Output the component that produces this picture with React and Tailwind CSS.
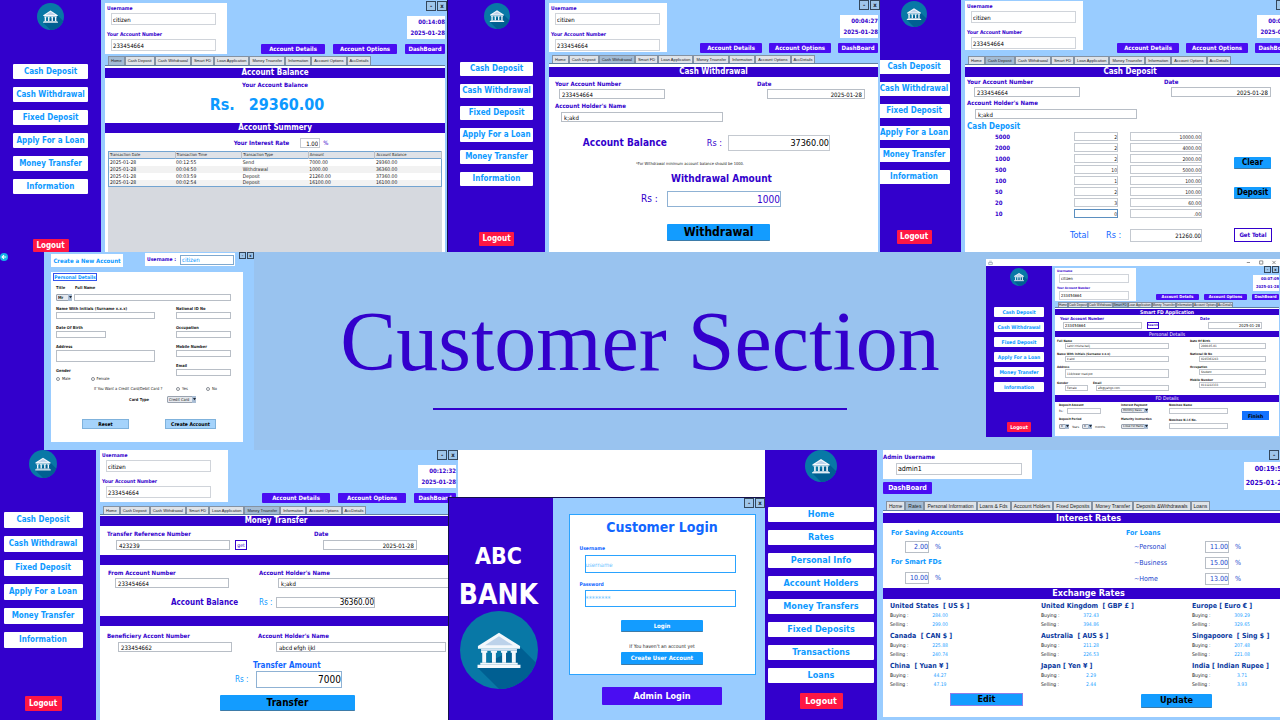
import { useId } from "react";
import clsx from "clsx";

const CUSTOMER_NAV = [
  "Cash Deposit",
  "Cash Withdrawal",
  "Fixed Deposit",
  "Apply For a Loan",
  "Money Transfer",
  "Information",
];
const ADMIN_NAV = [
  "Home",
  "Rates",
  "Personal Info",
  "Account Holders",
  "Money Transfers",
  "Fixed Deposits",
  "Transactions",
  "Loans",
];
const CUSTOMER_TABS = [
  "Home",
  "Cash Deposit",
  "Cash Withdrawal",
  "Smart FD",
  "Loan Application",
  "Money Trsansfer",
  "Information",
  "Account Options",
  "AccDetails",
];
const ADMIN_TABS = [
  "Home",
  "Rates",
  "Personal Information",
  "Loans & Fds",
  "Account Holders",
  "Fixed Deposits",
  "Money Transfer",
  "Deposits &Withdrawals",
  "Loans",
];

function BankLogo({ className }) {
  const clip = useId();
  return (
    <svg viewBox="-100 -100 200 200" className={clsx("shrink-0", className)} role="img" aria-label="Bank">
      <clipPath id={clip}>
        <circle r="100" />
      </clipPath>
      <circle r="100" fill="#0878a6" />
      <path clipPath={`url(#${clip})`} d="M52 -10 L152 90 L50 150 L-54 46 Z" fill="#005f92" />
      <path d="M-54 -10 L0 -44 L54 -10 V-3 H-54 Z" fill="#f4f8fc" />
      <path d="M-36 -12 L0 -35 L36 -12 Z" fill="#bcd2ea" />
      <path d="M-46 -3 H46 V2 H-46 Z" fill="#d5e4f3" />
      <g fill="#f4f8fc">
        <path d="M-46 2 h16 v5 h-3 v26 h-10 v-26 h-3 Z" />
        <path d="M-21 2 h16 v5 h-3 v26 h-10 v-26 h-3 Z" />
        <path d="M5 2 h16 v5 h-3 v26 h-10 v-26 h-3 Z" />
        <path d="M30 2 h16 v5 h-3 v26 h-10 v-26 h-3 Z" />
        <path d="M-48 33 H48 V38 H-48 Z" />
        <path d="M-55 38 H55 V46 H-55 Z" />
      </g>
    </svg>
  );
}

function Field({ label, value, type = "text", className, labelClass, inputClass, multiline }) {
  const id = useId();
  const box = clsx(
    "block border bg-white leading-none outline-none",
    inputClass
  );
  return (
    <div className={clsx("flex flex-col", className)}>
      <label htmlFor={id} className={clsx("whitespace-nowrap font-bold", labelClass)}>
        {label}
      </label>
      {multiline ? (
        <textarea id={id} defaultValue={value} className={clsx(box, "resize-none")} />
      ) : (
        <input id={id} type={type} defaultValue={value} className={box} />
      )}
    </div>
  );
}

function Box({ label, value, className }) {
  return (
    <input
      aria-label={label}
      defaultValue={value}
      className={clsx("shrink-0 border bg-white leading-none outline-none", className)}
    />
  );
}

function Pick({ label, options, className }) {
  return (
    <span className={clsx("relative inline-flex shrink-0", className)}>
      <select
        aria-label={label}
        className="w-full appearance-none rounded-[1px] border border-[#9aa3b0] bg-[#e6e9ee] px-px leading-none outline-none"
      >
        {options.map((o) => (
          <option key={o}>{o}</option>
        ))}
      </select>
      <span className="pointer-events-none absolute inset-y-0 right-0 flex w-1 items-center justify-center bg-[#a9bdd4]">
        <svg viewBox="0 0 4 3" className="w-[3px]">
          <path d="M0 0 H4 L2 3 Z" fill="#1d2733" />
        </svg>
      </span>
    </span>
  );
}

function Sidebar({ items, className, logoClass, navClass, itemClass, logoutClass }) {
  return (
    <aside className={clsx("flex shrink-0 flex-col items-center bg-[#3300cc]", className)}>
      <BankLogo className={logoClass} />
      <nav className={clsx("flex flex-col", navClass)}>
        {items.map((item) => (
          <button
            key={item}
            type="button"
            className={clsx(
              "flex items-center justify-center whitespace-nowrap rounded-[1px] bg-white font-bold leading-none text-[#0d99ff]",
              itemClass
            )}
          >
            {item}
          </button>
        ))}
      </nav>
      <button
        type="button"
        className={clsx(
          "mt-auto flex items-center justify-center rounded-[1px] bg-[#ff1744] font-bold leading-none text-white",
          logoutClass
        )}
      >
        Logout
      </button>
    </aside>
  );
}

function WindowButtons({ className, small }) {
  const b = clsx(
    "flex items-center justify-center border border-[#33475c] bg-[#9fc6ea] font-bold leading-none text-[#14202c]",
    small ? "size-[7px] text-[4px]" : "size-[10px] text-[6px]"
  );
  return (
    <div className={clsx("flex justify-end gap-px", className)}>
      <button type="button" aria-label="Minimize" className={b}>
        -
      </button>
      <button type="button" aria-label="Close" className={b}>
        x
      </button>
    </div>
  );
}

const NAV_BUTTON =
  "flex items-center justify-center whitespace-nowrap rounded-[1px] bg-[#4a0df2] font-bold leading-none text-white";

function CustomerHeader({ time, className, boxClass, navGap = "gap-2", navButton = "w-16", homeButton = "w-10" }) {
  return (
    <header className={clsx("flex", className)}>
      <div className={clsx("shrink-0 bg-white px-[2px] pt-px text-[#3300cc]", boxClass)}>
        <Field
          label="Username"
          value="citizen"
          labelClass="text-[5px] leading-[8px]"
          inputClass="mt-px ml-1 h-3 w-[105px] border-[#d0d4da] px-px text-[6px] text-black"
        />
        <Field
          label="Your Account Number"
          value="233454664"
          className="mt-[5px]"
          labelClass="text-[5px] leading-[8px]"
          inputClass="mt-px ml-1 h-3 w-[105px] border-[#d0d4da] px-px text-[6px] text-black"
        />
      </div>
      <div className="flex flex-1 flex-col items-end justify-end">
        <WindowButtons className="-mr-[2px] mb-[5px]" />
        <div className="flex h-[23px] w-[38px] flex-col justify-around bg-white text-right text-[6px] leading-none font-bold whitespace-nowrap text-[#3300cc]">
          <span>{time}</span>
          <span>2025-01-28</span>
        </div>
        <div className={clsx("mt-[5px] flex text-[6px]", navGap)}>
          <button type="button" className={clsx(NAV_BUTTON, "h-[10px]", navButton)}>
            Account Details
          </button>
          <button type="button" className={clsx(NAV_BUTTON, "h-[10px]", navButton)}>
            Account Options
          </button>
          <button type="button" className={clsx(NAV_BUTTON, "h-[10px]", homeButton)}>
            DashBoard
          </button>
        </div>
      </div>
    </header>
  );
}

function Tabs({ items, active, className, tabClass = "px-[2px]" }) {
  return (
    <div
      role="tablist"
      className={clsx(
        "flex border-b border-[#5f7fa3] bg-[#99ccff] pl-[3px] font-['Liberation_Sans',Arial,sans-serif] text-[#222]",
        className
      )}
    >
      {items.map((t) => (
        <button
          key={t}
          type="button"
          role="tab"
          aria-selected={t === active}
          className={clsx(
            "border border-b-0 border-[#8492a3] leading-none whitespace-nowrap",
            tabClass,
            t === active ? "bg-[#a3bbd3]" : "bg-[#dfe3e8]"
          )}
        >
          {t}
        </button>
      ))}
    </div>
  );
}

function Bar({ children, className }) {
  return (
    <h2
      className={clsx(
        "flex shrink-0 items-center justify-center bg-[#3300cc] leading-none font-bold whitespace-nowrap text-white",
        className
      )}
    >
      {children}
    </h2>
  );
}

const BLUE_BUTTON =
  "flex items-center justify-center whitespace-nowrap rounded-[1px] border-b border-[#3d7ba8] bg-[#139cff] font-bold leading-none";
const LABEL = "text-[6px] leading-[8px] text-[#3300cc]";
const INPUT = "h-[10px] border-[#b8bec6] px-[2px] text-[6px] text-black";

const TRANSACTIONS = [
  ["2025-01-28", "00:12:55", "Send", "7000.00", "29360.00"],
  ["2025-01-28", "00:04:50", "Withdrawal", "1000.00", "36360.00"],
  ["2025-01-28", "00:03:59", "Deposit", "21260.00", "37360.00"],
  ["2025-01-28", "00:02:54", "Deposit", "16100.00", "16100.00"],
];

function HomeWindow() {
  return (
    <section className="flex min-w-0 overflow-hidden bg-[#99ccff]">
      <Sidebar
        items={CUSTOMER_NAV}
        className="w-[101px] pt-[3px]"
        logoClass="size-[27px]"
        navClass="mt-[34px] gap-2"
        itemClass="h-[15px] w-[75px] text-[8px]"
        logoutClass="h-[13px] w-9 text-[8px]"
      />
      <div className="flex min-w-0 flex-1 flex-col pr-[2px] pl-1">
        <CustomerHeader time="00:14:08" className="pb-[2px]" boxClass="mt-[3px] h-[51px] w-[122px]" />
        <Tabs items={CUSTOMER_TABS} active="Home" className="h-[10px] text-[4px]" />
        <div className="flex flex-1 flex-col bg-white pt-[2px]">
          <Bar className="h-[10px] text-[8px]">Account Balance</Bar>
          <p className="mt-[3px] text-center text-[6px] leading-[8px] font-bold text-[#3300cc]">Your Account Balance</p>
          <p className="mt-[7px] flex justify-center gap-[14px] pr-4 text-[16px] leading-[18px] font-bold text-[#0d99ff]">
            <span>Rs.</span>
            <span>29360.00</span>
          </p>
          <Bar className="mt-[9px] h-[10px] text-[8px]">Account Summery</Bar>
          <div className="mt-[5px] flex items-center justify-center gap-[3px] pl-3 text-[6px] leading-none text-[#3300cc]">
            <span className="mr-2 font-bold">Your Interest Rate</span>
            <Box label="Interest rate" value="1.00" className="h-[10px] w-5 border-[#c4c9d0] px-px text-right text-black" />
            <span>%</span>
          </div>
          <div className="mx-[3px] mt-[3px] flex-1 bg-[#d6d9df]">
            <table className="w-full table-fixed border border-[#73a4d1] text-left text-[5px] leading-none text-[#222]">
              <thead>
                <tr className="h-[7px] border-b border-[#73a4d1] bg-[#dfe2e7] text-[4px]">
                  {["Transaction Date", "Transaction Time", "Transaction Type", "Amount", "Account Balance"].map((h) => (
                    <th key={h} className="border-r border-[#b9bec7] p-0 pl-px font-normal">
                      {h}
                    </th>
                  ))}
                </tr>
              </thead>
              <tbody>
                {TRANSACTIONS.map((row) => (
                  <tr key={row[1]} className="h-[7px] bg-white even:bg-[#f2f2f2]">
                    {row.map((c, i) => (
                      <td key={i} className="p-0 pl-px">
                        {c}
                      </td>
                    ))}
                  </tr>
                ))}
              </tbody>
            </table>
          </div>
        </div>
      </div>
    </section>
  );
}

function WithdrawalWindow() {
  return (
    <section className="flex min-w-0 overflow-hidden border-l border-[#14104a] bg-[#99ccff]">
      <Sidebar
        items={CUSTOMER_NAV}
        className="w-[97px] pt-[3px] pb-[6px]"
        logoClass="size-[26px]"
        navClass="mt-[33px] gap-2"
        itemClass="h-[14px] w-[73px] text-[8px]"
        logoutClass="h-[14px] w-[35px] text-[8px]"
      />
      <div className="flex min-w-0 flex-1 flex-col pr-[2px] pl-1">
        <CustomerHeader
          time="00:04:27"
          className="pb-[2px]"
          boxClass="mt-[3px] h-[49px] w-[118px]"
          navGap="gap-[7px]"
          navButton="w-[62px]"
        />
        <Tabs items={CUSTOMER_TABS} active="Cash Withdrawal" className="h-[9px] text-[4px]" />
        <div className="flex flex-1 flex-col bg-white pt-[3px]">
          <Bar className="h-[10px] text-[8px]">Cash Withdrawal</Bar>
          <div className="mt-[3px] flex justify-between pr-[13px] pl-[6px]">
            <Field label="Your Account Number" value="233454664" labelClass={LABEL} inputClass={clsx(INPUT, "mt-px ml-1 w-[106px]")} />
            <Field label="Date" value="2025-01-28" labelClass={LABEL} inputClass={clsx(INPUT, "mt-px ml-[10px] w-[98px] text-right")} />
          </div>
          <Field
            label="Account Holder's Name"
            value="k;akd"
            className="mt-[3px] pl-[6px]"
            labelClass={LABEL}
            inputClass={clsx(INPUT, "mt-[2px] ml-[6px] w-[162px]")}
          />
          <div className="mt-[13px] flex items-center justify-end pr-12 leading-none text-[#3300cc]">
            <span className="mr-10 text-[10px] font-bold">Account Balance</span>
            <span className="mr-[6px] text-[9px]">Rs :</span>
            <Box label="Account balance" value="37360.00" className="h-4 w-[102px] border-[#c4c9d0] text-right text-[9px] text-black" />
          </div>
          <p className="mt-[10px] pl-[87px] text-[4px] leading-[6px] text-[#222]">
            *For Withdrawal minimum account balance should be 1000.
          </p>
          <h3 className="mt-[6px] pl-[122px] text-[10px] leading-3 font-bold text-[#3300cc]">Withdrawal Amount</h3>
          <div className="mt-[6px] flex items-center pl-[92px] leading-none text-[#3300cc]">
            <span className="w-[26px] text-[10px]">Rs :</span>
            <Box label="Withdrawal amount" value="1000" className="h-4 w-[114px] border-[#8fb2d4] text-right text-[10px]" />
          </div>
          <button type="button" className={clsx(BLUE_BUTTON, "mt-[17px] ml-[118px] h-[17px] w-[103px] text-[12px] text-black")}>
            Withdrawal
          </button>
        </div>
      </div>
    </section>
  );
}

const NOTES = [
  ["5000", "2", "10000.00"],
  ["2000", "2", "4000.00"],
  ["1000", "2", "2000.00"],
  ["500", "10", "5000.00"],
  ["100", "1", "100.00"],
  ["50", "2", "100.00"],
  ["20", "3", "60.00"],
  ["10", "0", ".00"],
];

function DepositWindow() {
  return (
    <section className="min-w-0 overflow-hidden bg-[#99ccff]">
      <div className="-mr-[17px] -ml-4 flex h-full">
        <Sidebar
          items={CUSTOMER_NAV}
          className="w-[97px] pt-px pb-2 pl-[3px]"
          logoClass="size-[26px]"
          navClass="mt-[33px] gap-2"
          itemClass="h-[14px] w-[72px] text-[8px]"
          logoutClass="h-[14px] w-[35px] text-[8px]"
        />
        <div className="flex min-w-0 flex-1 flex-col pr-[2px] pl-1">
          <CustomerHeader
            time="00:03:52"
            className="pb-[3px]"
            boxClass="mt-px h-[49px] w-[118px]"
            navGap="gap-[7px]"
            navButton="w-[62px]"
          />
          <Tabs items={CUSTOMER_TABS} active="Cash Deposit" className="h-[9px] text-[4px]" />
          <div className="flex flex-1 flex-col bg-white pt-[2px]">
            <Bar className="h-[10px] text-[8px]">Cash Deposit</Bar>
            <div className="mt-px flex justify-between pr-6 pl-[2px]">
              <Field label="Your Account Number" value="233454664" labelClass={LABEL} inputClass={clsx(INPUT, "mt-px ml-[7px] w-[106px]")} />
              <Field label="Date" value="2025-01-28" labelClass={LABEL} inputClass={clsx(INPUT, "mt-px ml-[7px] w-[100px] text-right")} />
            </div>
            <Field
              label="Account Holder's Name"
              value="k;akd"
              className="mt-[2px] pl-[2px]"
              labelClass={LABEL}
              inputClass={clsx(INPUT, "mt-[2px] ml-2 w-[162px]")}
            />
            <h3 className="mt-[3px] pl-[2px] text-[8px] leading-[9px] font-bold text-[#0d99ff]">Cash Deposit</h3>
            <div className="mt-px flex">
              <div className="flex flex-col gap-[2px] pl-[30px]">
                {NOTES.map(([note, count, amount]) => (
                  <div key={note} className="flex h-[9px] items-center text-[5px] leading-none">
                    <span className="w-[79px] text-[6px] font-bold text-[#3300cc]">{note}</span>
                    <Box
                      label={`Count of ${note}`}
                      value={count}
                      className={clsx("mr-3 h-[9px] w-11 text-right text-[#222]", note === "10" ? "border-[#5b8fc0]" : "border-[#c4c9d0]")}
                    />
                    <Box label={`Amount in ${note}`} value={amount} className="h-[9px] w-[72px] border-[#c4c9d0] text-right text-[#222]" />
                  </div>
                ))}
              </div>
              <div className="ml-8 flex flex-col gap-[18px] pt-[25px] text-[8px] text-black">
                <button type="button" className={clsx(BLUE_BUTTON, "h-3 w-[37px]")}>
                  Clear
                </button>
                <button type="button" className={clsx(BLUE_BUTTON, "h-3 w-[37px]")}>
                  Deposit
                </button>
              </div>
            </div>
            <div className="mt-[10px] flex items-center pl-[105px] text-[9px] leading-none text-[#1166ff]">
              <span className="w-9">Total</span>
              <span className="w-6">Rs :</span>
              <Box label="Total" value="21260.00" className="h-[13px] w-[72px] border-[#c4c9d0] text-right text-[6px] text-black" />
              <button
                type="button"
                className="ml-8 h-[14px] w-[38px] border border-[#3300cc] bg-white text-[6px] font-bold whitespace-nowrap text-[#3300cc]"
              >
                Get Total
              </button>
            </div>
          </div>
        </div>
      </div>
    </section>
  );
}

const FORM_LABEL = "text-[4px] leading-[5px] text-[#222]";
const FORM_INPUT = "h-[7px] border-[#b8bec6] text-[4px] text-black";

function Radio({ name, children }) {
  return (
    <label className="flex items-center gap-[2px]">
      <input type="radio" name={name} className="size-1 appearance-none rounded-full border border-[#8a8f97] bg-white" />
      {children}
    </label>
  );
}

function CreateAccountWindow() {
  return (
    <section className="flex w-[254px] shrink-0 overflow-hidden bg-[#99ccff]">
      <aside className="w-11 shrink-0 bg-[#3300cc] pt-px">
        <button type="button" aria-label="Back" className="flex size-[8px] items-center justify-center rounded-full bg-[#14b4e6]">
          <svg viewBox="0 0 8 8" className="size-[6px]" fill="none" stroke="#ffffff" strokeWidth="1.5">
            <path d="M7 4 H1.5 M4 1.5 L1.5 4 L4 6.5" />
          </svg>
        </button>
      </aside>
      <div className="flex flex-1 flex-col pb-2 pl-[7px]">
        <div className="flex h-5 items-start">
          <h2 className="mt-[2px] flex h-[13px] w-[72px] items-center justify-center bg-white text-[6px] font-bold whitespace-nowrap text-[#0d99ff]">
            Create a New Account
          </h2>
          <label className="mt-px ml-[22px] flex h-[13px] w-[90px] items-center justify-between bg-white pr-px pl-[2px] text-[5px] font-bold whitespace-nowrap text-[#3300cc]">
            Username :
            <input defaultValue="citizen" className="h-[10px] w-[54px] border border-[#7fa9d0] px-px text-[6px] font-normal text-[#0d99ff]" />
          </label>
          <WindowButtons small className="ml-auto" />
        </div>
        <form className="mr-[11px] flex flex-1 flex-col bg-white px-[5px] pt-px text-[4px] leading-[5px] text-[#222]">
          <h3 className="-ml-[3px] flex h-2 w-11 items-center justify-center border border-[#3355ee] text-[5px] font-bold whitespace-nowrap text-[#0d99ff]">
            Personal Details
          </h3>
          <div className="mt-[4px] flex gap-[10px] font-bold">
            <span>Title</span>
            <span>Full Name</span>
          </div>
          <div className="mt-1 flex gap-[2px]">
            <Pick label="Title" options={["Mr", "Mrs", "Miss"]} className="h-[7px] w-4 font-bold" />
            <Box label="Full name" value="" className="h-[7px] w-[157px] border-[#b8bec6]" />
          </div>
          <div className="mt-[5px] grid grid-cols-[120px_1fr]">
            <div className="flex flex-col">
              <Field label="Name With Initials (Surname x.x.x)" labelClass={FORM_LABEL} inputClass={clsx(FORM_INPUT, "mt-px w-[99px]")} />
              <Field className="mt-[6px]" label="Date Of Birth" labelClass={FORM_LABEL} inputClass={clsx(FORM_INPUT, "mt-px w-[50px]")} />
              <Field multiline className="mt-[6px]" label="Address" labelClass={FORM_LABEL} inputClass="mt-px h-3 w-[99px] border-[#b8bec6]" />
              <span className="mt-[6px] font-bold">Gender</span>
              <div className="mt-[3px] flex gap-5">
                <Radio name="gender">Male</Radio>
                <Radio name="gender">Female</Radio>
              </div>
            </div>
            <div className="flex flex-col">
              <Field label="National ID No" labelClass={FORM_LABEL} inputClass={clsx(FORM_INPUT, "mt-px w-[55px]")} />
              <Field className="mt-[6px]" label="Occupation" labelClass={FORM_LABEL} inputClass={clsx(FORM_INPUT, "mt-px w-[55px]")} />
              <Field className="mt-[6px]" label="Mobile Number" labelClass={FORM_LABEL} inputClass={clsx(FORM_INPUT, "mt-px w-[55px]")} />
              <Field className="mt-[6px]" label="Email" labelClass={FORM_LABEL} inputClass={clsx(FORM_INPUT, "mt-px w-[55px]")} />
            </div>
          </div>
          <div className="mt-[5px] grid grid-cols-[120px_30px_1fr]">
            <span className="pl-[38px]">If You Want a Credit Card/Debit Card ?</span>
            <Radio name="card">Yes</Radio>
            <Radio name="card">No</Radio>
          </div>
          <div className="mt-[5px] flex items-center pl-[73px]">
            <span className="w-[38px] font-bold">Card Type</span>
            <Pick label="Card type" options={["Credit Card", "Debit Card"]} className="h-[7px] w-[29px]" />
          </div>
          <div className="mt-4 flex gap-9 pl-[26px] text-[5px] font-bold text-black">
            <button type="reset" className="h-[10px] w-[47px] border border-[#7fb2dc] bg-[#a5d3fb]">
              Reset
            </button>
            <button type="button" className="h-[10px] w-[51px] border border-[#7fb2dc] bg-[#a5d3fb] whitespace-nowrap">
              Create Account
            </button>
          </div>
        </form>
      </div>
    </section>
  );
}

const TINY_LABEL = "text-[3px] leading-[4px] text-[#222]";
const TINY_INPUT = "h-[6px] border-[#c0c5cc] px-px text-[3px] text-[#222]";

function SmartFdWindow() {
  return (
    <section className="flex w-[294px] shrink-0 flex-col self-start overflow-hidden bg-[#99ccff]">
      <div className="flex h-[7px] items-center justify-between bg-white px-[2px] text-[#444]">
        <svg viewBox="0 0 8 8" className="size-[5px]" fill="none" stroke="#7d8da0">
          <path d="M1 4 H7 V7 H1 Z M3 1 V3 M5 1 V3" />
        </svg>
        <svg viewBox="0 0 40 6" className="h-[5px] w-[32px]" fill="none" stroke="#777">
          <path d="M1 3 H5 M17 1 H21 V5 H17 Z M33 1 L37 5 M37 1 L33 5" />
        </svg>
      </div>
      <div className="flex">
        <Sidebar
          items={CUSTOMER_NAV}
          className="w-[66px] pt-[2px] pb-[5px]"
          logoClass="size-[18px]"
          navClass="mt-[21px] gap-[5px]"
          itemClass="h-[10px] w-[50px] text-[5px]"
          logoutClass="h-[10px] w-6 text-[5px]"
        />
        <div className="flex min-w-0 flex-1 flex-col pr-px pb-px pl-[3px]">
          <header className="flex justify-between">
            <div className="mt-[2px] h-[33px] w-[81px] bg-white px-[2px] pt-px text-[#3300cc]">
              <Field
                label="Username"
                value="citizen"
                labelClass="text-[3px] leading-[5px]"
                inputClass="ml-[2px] h-[9px] w-[70px] border-[#d0d4da] px-px text-[4px] text-black"
              />
              <Field
                label="Your Account Number"
                value="233454664"
                className="mt-[2px]"
                labelClass="text-[3px] leading-[6px]"
                inputClass="ml-[2px] h-[9px] w-[70px] border-[#d0d4da] px-px text-[4px] text-black"
              />
            </div>
            <div className="flex flex-col items-end">
              <WindowButtons small className="mb-[2px]" />
              <div className="flex h-4 w-[26px] flex-col justify-around bg-white text-right text-[4px] leading-none font-bold whitespace-nowrap text-[#3300cc]">
                <span>00:07:09</span>
                <span>2025-01-28</span>
              </div>
              <div className="mt-[3px] flex gap-[5px] text-[4px]">
                <button type="button" className={clsx(NAV_BUTTON, "h-[6px] w-[43px]")}>
                  Account Details
                </button>
                <button type="button" className={clsx(NAV_BUTTON, "h-[6px] w-[43px]")}>
                  Account Options
                </button>
                <button type="button" className={clsx(NAV_BUTTON, "h-[6px] w-[27px]")}>
                  DashBoard
                </button>
              </div>
            </div>
          </header>
          <Tabs items={CUSTOMER_TABS} active="Smart FD" className="mt-px h-[6px] text-[3px]" tabClass="px-0" />
          <div className="bg-white pt-px pb-[7px]">
            <Bar className="h-[6px] text-[5px]">Smart FD Application</Bar>
            <div className="mt-px flex items-end pl-[5px]">
              <Field
                label="Your Account Number"
                value="233454664"
                labelClass="text-[4px] leading-[6px] text-[#3300cc]"
                inputClass="ml-[3px] h-[7px] w-[79px] border-[#c0c5cc] px-px text-[4px] text-black"
              />
              <button
                type="button"
                className="ml-[5px] flex h-[7px] w-3 items-center justify-center border border-[#3300cc] bg-white text-[3px] leading-none font-bold text-[#3300cc]"
              >
                Search
              </button>
              <Field
                label="Date"
                value="2025-01-28"
                className="ml-[41px]"
                labelClass="text-[4px] leading-[6px] text-[#3300cc]"
                inputClass="ml-2 h-[7px] w-[54px] border-[#c0c5cc] px-px text-right text-[4px] text-black"
              />
            </div>
            <Bar className="mt-[2px] h-[6px] text-[5px] font-normal">Personal Details</Bar>
            <div className="mt-[2px] grid grid-cols-[133px_1fr] pl-[2px] text-[3px]">
              <div className="flex flex-col gap-[3px]">
                <Field label="Full Name" value="Lahiri thisha kalij" labelClass={TINY_LABEL} inputClass={clsx(TINY_INPUT, "ml-2 w-[104px]")} />
                <Field
                  label="Name With Initials (Surname x.x.x)"
                  value="k;akd"
                  labelClass={TINY_LABEL}
                  inputClass={clsx(TINY_INPUT, "ml-2 w-[104px]")}
                />
                <Field label="Address" value="118/lower road,pot" labelClass={TINY_LABEL} inputClass="ml-2 h-[9px] w-[104px] border-[#c0c5cc] px-px text-[3px] text-[#222]" />
                <div className="flex gap-[5px]">
                  <Field label="Gender" value="Female" labelClass={TINY_LABEL} inputClass={clsx(TINY_INPUT, "ml-2 w-[23px]")} />
                  <Field label="Email" value="afb@yahgo.com" labelClass={TINY_LABEL} inputClass={clsx(TINY_INPUT, "ml-[3px] w-[73px]")} />
                </div>
              </div>
              <div className="flex flex-col gap-[3px]">
                <Field label="Date Of Birth" value="2000-05-01" labelClass={TINY_LABEL} inputClass={clsx(TINY_INPUT, "ml-[9px] w-[67px]")} />
                <Field label="National ID No" value="0245363243" labelClass={TINY_LABEL} inputClass={clsx(TINY_INPUT, "ml-[9px] w-[67px]")} />
                <Field label="Occupation" value="Student" labelClass={TINY_LABEL} inputClass={clsx(TINY_INPUT, "ml-[9px] w-[67px]")} />
                <Field label="Mobile Number" value="0111222333" labelClass={TINY_LABEL} inputClass={clsx(TINY_INPUT, "ml-[9px] w-[67px]")} />
              </div>
            </div>
            <Bar className="mt-1 h-[7px] text-[5px] font-normal">FD Details</Bar>
            <div className="mt-px flex pl-[4px] text-[3px] leading-[4px] text-[#222]">
              <div className="flex w-[62px] flex-col">
                <span className="font-bold">Deposit Amount</span>
                <div className="mt-px flex items-center gap-[2px]">
                  <span className="w-[6px]">Rs :</span>
                  <Box label="Deposit amount" value="" className="h-[6px] w-[34px] border-[#c0c5cc]" />
                </div>
                <span className="mt-[3px] font-bold">Deposit Period</span>
                <div className="mt-[3px] flex items-center gap-[3px]">
                  <Pick label="Years" options={["0", "1"]} className="h-[5px] w-[10px]" />
                  <span>Years</span>
                  <Pick label="Months" options={["0", "1"]} className="h-[5px] w-[10px]" />
                  <span>months</span>
                </div>
              </div>
              <div className="flex w-12 flex-col">
                <span className="font-bold">Interest Payment</span>
                <Pick label="Interest payment" options={["Monthly Basis"]} className="mt-px h-[5px] w-[27px]" />
                <span className="mt-[4px] font-bold whitespace-nowrap">Maturity Instruction</span>
                <Pick label="Maturity instruction" options={["Close FD Manu..."]} className="mt-[3px] h-[5px] w-[27px]" />
              </div>
              <div className="flex w-[73px] flex-col">
                <Field label="Nominee Name" labelClass={TINY_LABEL} inputClass={clsx(TINY_INPUT, "mt-px w-[59px]")} />
                <Field label="Nominee N.I.C No." className="mt-[4px]" labelClass={TINY_LABEL} inputClass={clsx(TINY_INPUT, "mt-px w-[59px]")} />
              </div>
              <button type="button" className="mt-2 h-[9px] w-[27px] bg-[#1473ff] text-[5px] font-bold text-black">
                Finish
              </button>
            </div>
          </div>
        </div>
      </div>
    </section>
  );
}

function TransferWindow() {
  return (
    <section className="min-w-0">
      <div className="-mr-[10px] -ml-[10px] flex h-full bg-[#99ccff]">
        <Sidebar
          items={CUSTOMER_NAV}
          className="w-[106px] pb-[9px]"
          logoClass="size-7"
          navClass="mt-[34px] gap-2"
          itemClass="h-4 w-[79px] text-[8px]"
          logoutClass="h-[15px] w-[37px] text-[8px]"
        />
        <div className="flex min-w-0 flex-1 flex-col pl-1">
          <CustomerHeader
            time="00:12:32"
            className="pr-[2px] pb-[3px]"
            boxClass="h-[52px] w-[128px]"
            navButton="w-[68px]"
            homeButton="w-[42px]"
          />
          <Tabs items={CUSTOMER_TABS} active="Money Trsansfer" className="h-[9px] text-[4px]" />
          <div className="flex flex-1 flex-col bg-white pt-px">
            <Bar className="h-[10px] pr-[6px] text-[8px]">Money Transfer</Bar>
            <div className="mt-1 flex items-end pl-[7px]">
              <Field
                label="Transfer Reference Number"
                value="423239"
                labelClass={LABEL}
                inputClass={clsx(INPUT, "mt-[2px] ml-[9px] w-[114px]")}
              />
              <button
                type="button"
                className="ml-[5px] flex h-[10px] w-3 items-center justify-center border border-[#3300cc] bg-white text-[5px] leading-none text-[#3300cc]"
              >
                get
              </button>
              <Field
                label="Date"
                value="2025-01-28"
                className="ml-[67px]"
                labelClass={LABEL}
                inputClass={clsx(INPUT, "mt-[2px] ml-[9px] w-[94px] text-right")}
              />
            </div>
            <Bar className="mt-[5px] h-[10px]" />
            <div className="mt-1 flex pl-2">
              <Field
                label="From Account Number"
                value="233454664"
                className="w-[151px]"
                labelClass={LABEL}
                inputClass={clsx(INPUT, "mt-px ml-[7px] w-[114px]")}
              />
              <Field
                label="Account Holder's Name"
                value="k;akd"
                className="flex-1"
                labelClass={LABEL}
                inputClass={clsx(INPUT, "mt-px ml-[19px]")}
              />
            </div>
            <div className="mt-[9px] flex items-center pl-[71px] leading-none">
              <span className="w-[88px] text-[8px] font-bold text-[#3300cc]">Account Balance</span>
              <span className="w-[17px] text-[8px] text-[#0d99ff]">Rs :</span>
              <Box label="Account balance" value="36360.00" className="h-[11px] w-[99px] border-[#b8bec6] text-right text-[8px] text-black" />
            </div>
            <Bar className="mt-[8px] h-[10px]" />
            <div className="mt-[6px] flex pl-[7px]">
              <Field
                label="Beneficiery Accont Number"
                value="233454662"
                className="w-[151px]"
                labelClass={LABEL}
                inputClass={clsx(INPUT, "mt-[2px] ml-[11px] w-[114px]")}
              />
              <Field
                label="Account Holder's Name"
                value="abcd efgh ijkl"
                className="flex-1 pr-3"
                labelClass={LABEL}
                inputClass={clsx(INPUT, "mt-[2px] ml-[18px]")}
              />
            </div>
            <h3 className="mt-[9px] pl-[153px] text-[8px] leading-[10px] font-bold text-[#1166ff]">Transfer Amount</h3>
            <div className="flex items-center pl-[135px] leading-none">
              <span className="w-[21px] text-[8px] text-[#0d99ff]">Rs :</span>
              <Box label="Transfer amount" value="7000" className="h-[17px] w-[86px] border-[#8fb2d4] text-right text-[10px] text-black" />
            </div>
            <button type="button" className={clsx(BLUE_BUTTON, "mt-[7px] ml-[120px] h-4 w-[135px] text-[10px] text-black")}>
              Transfer
            </button>
          </div>
        </div>
      </div>
    </section>
  );
}

function LoginWindow() {
  return (
    <section className="relative z-10 flex min-w-0 flex-col pt-[47px]">
      <div className="flex flex-1 border-t border-l border-[#14104a] bg-[#99ccff]">
        <aside className="flex w-[104px] shrink-0 flex-col items-center bg-[#3300cc] pr-[5px] font-bold text-white">
          <span className="mt-[44px] text-[23px] leading-[28px]">ABC</span>
          <span className="mt-[10px] text-[28px] leading-[30px]">BANK</span>
          <BankLogo className="mt-px size-[78px]" />
        </aside>
        <div className="flex min-w-0 flex-1 flex-col items-center">
          <WindowButtons className="h-[16px] w-full" />
          <div className="flex flex-col items-center pl-[6px]">
            <form className="flex w-[187px] flex-col items-center border border-[#2aa3ff] bg-white px-[10px] pt-1 pb-[9px] text-[#1166ff]">
              <h2 className="text-[14px] leading-4 font-bold">Customer Login</h2>
              <Field
                label="Username"
                value="username"
                className="mt-2 w-full"
                labelClass="text-[5px] leading-[10px]"
                inputClass="mt-[2px] mr-[9px] ml-[5px] h-[18px] border-[#2aa3ff] text-[6px] text-[#6ec3ff]"
              />
              <Field
                label="Password"
                value="********"
                className="mt-[6px] w-full"
                labelClass="text-[5px] leading-[10px]"
                inputClass="mt-px mr-[9px] ml-[5px] h-[17px] border-[#2aa3ff] text-[7px] text-[#6ec3ff]"
              />
              <button type="button" className={clsx(BLUE_BUTTON, "mt-[13px] h-3 w-[82px] text-[6px] text-white")}>
                Login
              </button>
              <p className="mt-[10px] text-[5px] leading-[8px] text-[#222]">If You haven't an account yet</p>
              <button type="button" className={clsx(BLUE_BUTTON, "mt-[2px] h-[13px] w-[82px] text-[6px] text-white")}>
                Create User Account
              </button>
            </form>
            <button type="button" className={clsx(NAV_BUTTON, "mt-3 h-[18px] w-[120px] text-[9px]")}>
              Admin Login
            </button>
          </div>
        </div>
      </div>
    </section>
  );
}

const CURRENCIES = [
  ["United States  [ US $ ]", "284.00", "299.00"],
  ["United Kingdom  [ GBP £ ]", "372.43", "394.86"],
  ["Europe [ Euro € ]", "309.29", "329.65"],
  ["Canada  [ CAN $ ]", "225.88", "240.74"],
  ["Australia  [ AUS $ ]", "211.28", "226.53"],
  ["Singapoore  [ Sing $ ]", "207.48", "221.08"],
  ["China  [ Yuan ¥ ]", "44.27", "47.19"],
  ["Japan [ Yen ¥ ]", "2.29", "2.44"],
  ["India [ Indian Rupee ]", "3.71", "3.93"],
];

function Rate({ label, value }) {
  return (
    <span className="flex items-center gap-[6px] leading-none">
      <Box label={label} value={value} className="h-3 w-6 border-[#b8bec6] text-right text-[7px] text-[#2244cc]" />
      <span>%</span>
    </span>
  );
}

function AdminWindow() {
  return (
    <section className="min-w-0 overflow-hidden bg-[#99ccff]">
      <div className="-mr-[14px] flex h-full">
        <Sidebar
          items={ADMIN_NAV}
          className="w-[112px] pb-[11px]"
          logoClass="size-8"
          navClass="mt-[25px] gap-2"
          itemClass="h-[15px] w-[106px] text-[9px]"
          logoutClass="h-4 w-[43px] text-[9px]"
        />
        <div className="flex min-w-0 flex-1 flex-col pb-[3px] pl-[6px]">
          <header className="flex h-[51px] justify-between">
            <div className="flex flex-col items-start">
              <div className="h-[29px] w-[149px] bg-white pt-[3px]">
                <Field
                  label="Admin Username"
                  value="admin1"
                  labelClass="text-[6px] leading-[8px] text-[#3300cc]"
                  inputClass="mt-[2px] ml-[13px] h-3 w-[126px] border-[#c4c9d0] px-px text-[7px] text-black"
                />
              </div>
              <button type="button" className={clsx(NAV_BUTTON, "mt-[3px] h-3 w-[49px] text-[7px]")}>
                DashBoard
              </button>
            </div>
            <div className="flex flex-col items-end pr-1">
              <WindowButtons />
              <div className="mt-[2px] flex h-[28px] w-[46px] flex-col justify-around bg-white pr-1 text-right text-[7px] leading-none font-bold whitespace-nowrap text-[#3300cc]">
                <span>00:19:55</span>
                <span>2025-01-28</span>
              </div>
            </div>
          </header>
          <Tabs items={ADMIN_TABS} active="Rates" className="h-[10px] text-[5px]" />
          <div className="flex flex-1 flex-col bg-white pt-[2px] text-[7px] leading-[10px] text-[#2244cc]">
            <Bar className="h-[10px] text-[9px]">Interest Rates</Bar>
            <div className="mt-[5px] grid grid-cols-[235px_1fr] pl-2">
              <div className="flex flex-col">
                <h3 className="font-bold text-[#0d99ff]">For Saving Accounts</h3>
                <div className="mt-[3px] pl-[14px]">
                  <Rate label="Saving accounts rate" value="2.00" />
                </div>
                <h3 className="mt-[4px] font-bold text-[#0d99ff]">For Smart FDs</h3>
                <div className="mt-[5px] pl-[14px]">
                  <Rate label="Smart FD rate" value="10.00" />
                </div>
              </div>
              <div className="flex flex-col">
                <h3 className="font-bold text-[#0d99ff]">For Loans</h3>
                <div className="mt-[3px] flex flex-col gap-1 pl-2">
                  {[
                    ["~Personal", "11.00"],
                    ["~Business", "15.00"],
                    ["~Home", "13.00"],
                  ].map(([name, rate]) => (
                    <div key={name} className="flex h-3 items-center">
                      <span className="w-[71px]">{name}</span>
                      <Rate label={name} value={rate} />
                    </div>
                  ))}
                </div>
              </div>
            </div>
            <Bar className="mt-[3px] h-[11px] text-[9px]">Exchange Rates</Bar>
            <div className="mt-[2px] grid grid-cols-[151px_151px_1fr] pl-[7px]">
              {CURRENCIES.map(([name, buy, sell]) => (
                <div key={name} className="h-[30px] text-[5px] leading-[9px] text-[#222]">
                  <h3 className="text-[7px] leading-[10px] font-bold whitespace-pre text-[#0b3a9e]">{name}</h3>
                  <div className="flex items-center">
                    <span className="w-6">Buying :</span>
                    <span className="w-[52px] text-center text-[#2aa3ff]">{buy}</span>
                  </div>
                  <div className="flex items-center">
                    <span className="w-6">Selling :</span>
                    <span className="w-[52px] text-center text-[#2aa3ff]">{sell}</span>
                  </div>
                </div>
              ))}
            </div>
            <div className="mt-[2px] flex items-start gap-[118px] pl-[67px] text-black">
              <button type="button" className="flex h-[13px] w-[73px] items-center justify-center border border-[#8f7de8] bg-[#139cff] text-[9px] leading-none font-bold">
                Edit
              </button>
              <button type="button" className={clsx(BLUE_BUTTON, "mt-px h-[14px] w-[71px] text-[9px]")}>
                Update
              </button>
            </div>
          </div>
        </div>
      </div>
    </section>
  );
}

export default function App() {
  return (
    <main className="grid min-h-screen grid-cols-1 grid-rows-[252fr_198fr_270fr] overflow-hidden bg-[#99c3ef] font-['DejaVu_Sans_Condensed','Open_Sans',sans-serif]">
      <div className="grid grid-cols-[447fr_433fr_400fr]">
        <HomeWindow />
        <WithdrawalWindow />
        <DepositWindow />
      </div>
      <div className="flex">
        <CreateAccountWindow />
        <div className="flex flex-1 flex-col items-center justify-center pt-[2px] pl-10">
          <h1 className="font-['Liberation_Serif','Times_New_Roman',serif] text-[84px] leading-[96px] whitespace-nowrap text-[#3300cc]">
            Customer Section
          </h1>
          <hr className="mt-[18px] w-[414px] border-t-2 border-[#3300cc]" />
        </div>
        <div className="pt-[7px]">
          <SmartFdWindow />
        </div>
      </div>
      <div className="grid grid-cols-[448fr_317fr_515fr] bg-white">
        <TransferWindow />
        <LoginWindow />
        <AdminWindow />
      </div>
    </main>
  );
}
